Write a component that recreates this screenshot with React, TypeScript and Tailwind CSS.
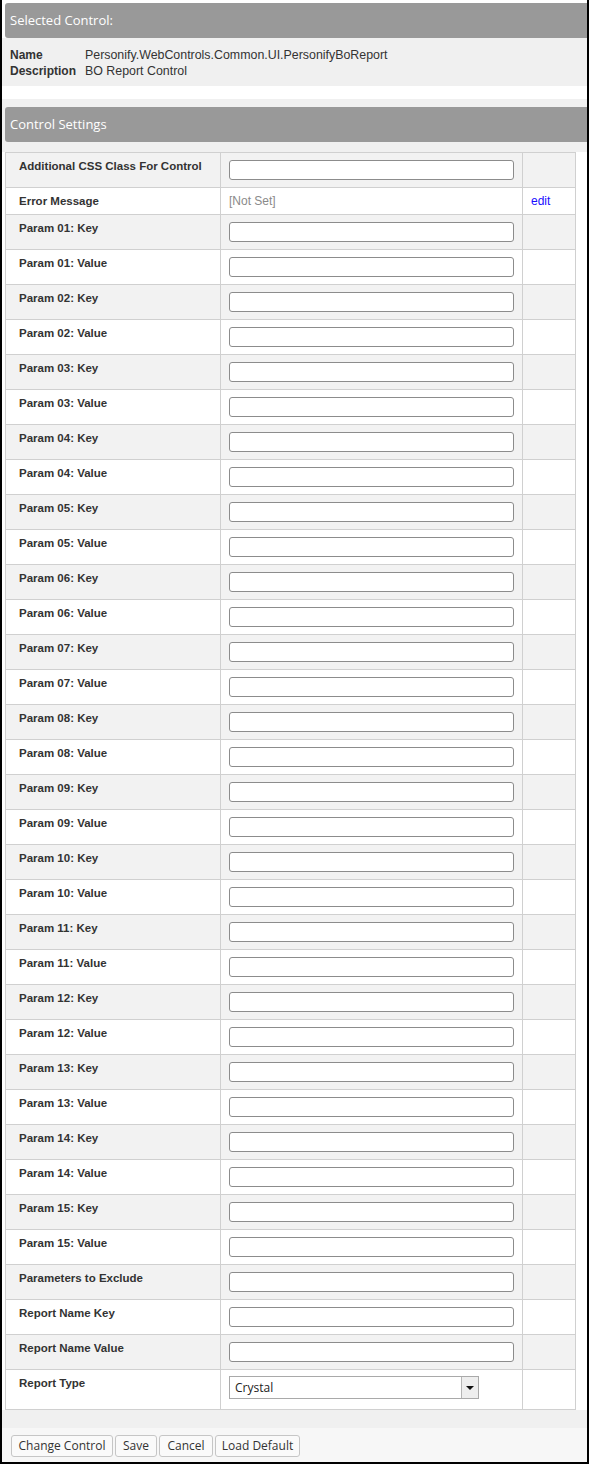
const rows: { label: string; kind: "input" | "error" | "select" }[] = [
  { label: "Additional CSS Class For Control", kind: "input" },
  { label: "Error Message", kind: "error" },
];

for (let i = 1; i <= 15; i++) {
  const n = String(i).padStart(2, "0");
  rows.push({ label: `Param ${n}: Key`, kind: "input" });
  rows.push({ label: `Param ${n}: Value`, kind: "input" });
}

rows.push({ label: "Parameters to Exclude", kind: "input" });
rows.push({ label: "Report Name Key", kind: "input" });
rows.push({ label: "Report Name Value", kind: "input" });
rows.push({ label: "Report Type", kind: "select" });

const arial = "font-['Liberation_Sans',Arial,sans-serif]";
const segoe = "font-['Open_Sans','Noto_Sans',sans-serif]";

function SectionHeader({ title }: { title: string }) {
  return (
    <div
      className={`ml-[3px] h-[35px] flex items-center pl-[5px] bg-[#999999] rounded-l-[3px] text-white text-[13px] ${segoe}`}
    >
      {title}
    </div>
  );
}

function SettingRow({
  label,
  kind,
  shaded,
}: {
  label: string;
  kind: "input" | "error" | "select";
  shaded: boolean;
}) {
  const height =
    kind === "error" ? "h-[27px]" : kind === "select" ? "h-[40px]" : "h-[35px]";
  const bg = shaded ? "bg-[#f2f2f2]" : "bg-white";
  return (
    <div className={`flex ${height} ${bg}`}>
      <div className="w-[215px] shrink-0 border-r border-b border-[#d0d0d0] pl-[13px] pt-[6px] text-[11.5px] leading-[14px] font-bold text-[#333333]">
        {label}
      </div>
      <div className="w-[302px] shrink-0 border-r border-b border-[#d0d0d0] pl-[8px]">
        {kind === "input" && (
          <div className="mt-[7px] w-[285px] h-[20px] border border-[#8c8c8c] rounded-[3px] bg-white" />
        )}
        {kind === "error" && (
          <div className="pt-[6px] text-[12px] leading-[14px] text-[#8a8a8a]">
            [Not Set]
          </div>
        )}
        {kind === "select" && (
          <div className="mt-[6px] w-[250px] h-[23px] flex border border-[#a9a9a9] bg-white">
            <div
              className={`flex-1 pl-[5px] flex items-center text-[12px] text-[#222222] ${segoe}`}
            >
              Crystal
            </div>
            <div className="w-[17px] border-l border-[#b5b5b5] bg-[#eeeeee] flex items-center justify-center">
              <div className="w-0 h-0 border-l-[4px] border-r-[4px] border-t-[4px] border-l-transparent border-r-transparent border-t-[#111111]" />
            </div>
          </div>
        )}
      </div>
      <div className="w-[53px] shrink-0 border-r border-b border-[#d0d0d0] pl-[8px]">
        {kind === "error" && (
          <div className="pt-[6px] text-[12px] leading-[14px] text-[#1a0dff]">
            edit
          </div>
        )}
      </div>
    </div>
  );
}

function FooterButton({ label, width }: { label: string; width: string }) {
  return (
    <div
      className={`${width} h-[22px] flex items-center justify-center border border-[#c6c6c6] rounded-[3px] bg-[#fafafa] text-[12px] text-[#333333] ${segoe}`}
    >
      {label}
    </div>
  );
}

export default function App() {
  return (
    <div
      className={`w-[589px] h-[1464px] bg-white border-l-2 border-r-2 border-b-2 border-black pt-[3px] flex flex-col ${arial}`}
    >
      {/* selected control */}
      <SectionHeader title="Selected Control:" />
      <div className="h-[48px] bg-[#f0f0f0] pt-[9px] pl-[8px] text-[12.4px] leading-[16px] text-[#333333]">
        <div className="flex">
          <span className="w-[75px] font-bold text-[12px]">Name</span>
          <span>Personify.WebControls.Common.UI.PersonifyBoReport</span>
        </div>
        <div className="flex">
          <span className="w-[75px] font-bold text-[12px]">Description</span>
          <span>BO Report Control</span>
        </div>
      </div>
      <div className="h-[13px]" />

      {/* control settings */}
      <div className="bg-[#f0f0f0] pt-[8px]">
        <SectionHeader title="Control Settings" />
        <div className="h-[10px]" />
        <div className="bg-white pl-[3px]">
          <div className="w-[571px] border-l border-t border-[#d0d0d0]">
            {rows.map((r, i) => (
              <SettingRow
                key={r.label}
                label={r.label}
                kind={r.kind}
                shaded={i % 2 === 0}
              />
            ))}
          </div>
        </div>
        <div className="h-[18px]" />
      </div>

      <div className="flex-1 bg-[#f7f7f7] pt-[7px] pl-[9px] flex gap-[2px]">
        <FooterButton label="Change Control" width="w-[102px]" />
        <FooterButton label="Save" width="w-[42px]" />
        <FooterButton label="Cancel" width="w-[54px]" />
        <FooterButton label="Load Default" width="w-[85px]" />
      </div>
    </div>
  );
}
